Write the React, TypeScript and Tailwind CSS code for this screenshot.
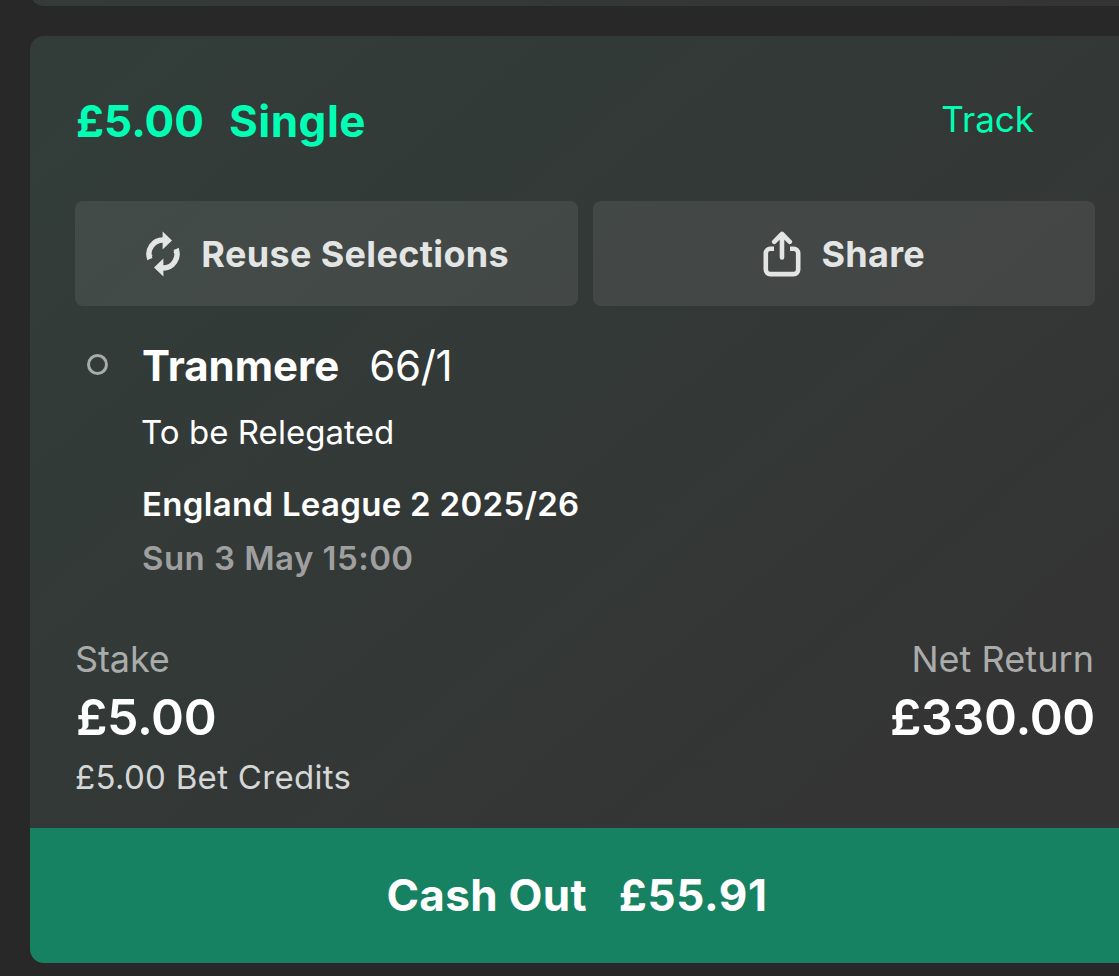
function ReuseIcon() {
  return (
    <svg width="34" height="46" viewBox="0 0 34 46" fill="none" className="shrink-0">
      <path d="M3.9 28A14 14 0 0 1 17 9" stroke="#e3e5e4" strokeWidth="5.4" />
      <path d="M1.1 29.4 6.6 24.8 4 22Z" fill="#e3e5e4" />
      <path d="M16.6 0.5 26 9.6 16.6 18.6Z" fill="#e3e5e4" />
      <path d="M30.1 18A14 14 0 0 1 17 37" stroke="#e3e5e4" strokeWidth="5.4" />
      <path d="M32.9 16.6 27.4 21.2 30 24Z" fill="#e3e5e4" />
      <path d="M17.4 27.4 8 36.4 17.4 45.5Z" fill="#e3e5e4" />
    </svg>
  );
}

function ShareIcon() {
  return (
    <svg
      width="38"
      height="46"
      viewBox="0 0 38 46"
      fill="none"
      stroke="#e3e5e4"
      strokeWidth="4.6"
      strokeLinecap="round"
      strokeLinejoin="round"
      className="shrink-0"
    >
      <path d="M19 3V26.5M11.2 10.8 19 3 26.8 10.8" />
      <path d="M11 17.7H7.3A4.5 4.5 0 0 0 2.8 22.2V38.6A4.5 4.5 0 0 0 7.3 43.1H30.7A4.5 4.5 0 0 0 35.2 38.6V22.2A4.5 4.5 0 0 0 30.7 17.7H27" strokeLinecap="butt" />
    </svg>
  );
}

export default function App() {
  return (
    <div className="h-[976px] w-[1119px] overflow-hidden bg-[#282828] pl-[30px] font-['Inter',sans-serif] text-white">
      {/* Bottom edge of the previous bet */}
      <div className="h-[6px] w-[1110px] overflow-hidden">
        <div className="-mt-[30px] h-[36px] rounded-[14px] bg-linear-to-r from-[#343b38] to-[#343434]" />
      </div>

      <div className="mt-[30px] h-[927px] w-[1110px] overflow-hidden rounded-[14px] bg-linear-to-br from-[#323d3a] via-[#333836] via-50% to-[#343434] to-80%">
        <div className="px-[45px] pt-[58px]">
          <div className="flex h-[55px] items-center justify-between pr-[61px] text-[#00ffb4]">
            <h2 className="flex gap-[25px] pl-px text-[44px] font-bold leading-[55px]">
              <span>£5.00</span>
              <span className="tracking-[0.5px]">Single</span>
            </h2>
            <button className="-mt-1 text-[35px] leading-[55px]">Track</button>
          </div>

          <div className="mt-[52px] grid grid-cols-2 gap-[15px]">
            <button className="flex h-[105px] items-center justify-center gap-[21px] rounded-[8px] bg-white/8 pl-[3px] text-[36px] font-bold text-[#e3e5e4]">
              <ReuseIcon />
              <span className="tracking-[0.35px]">Reuse Selections</span>
            </button>
            <button className="flex h-[105px] items-center justify-center gap-[20px] rounded-[8px] bg-white/8 pl-px text-[36px] font-bold text-[#e3e5e4]">
              <ShareIcon />
              <span className="tracking-[0.3px]">Share</span>
            </button>
          </div>

          {/* Selection */}
          <div className="mt-[35px] flex">
            <span className="ml-[12px] mt-[13px] h-[21px] w-[21px] shrink-0 rounded-full border-3 border-[#a9abaa]" />
            <div className="ml-[34px]">
              <div className="flex gap-[30px] text-[42px] leading-[50px]">
                <span className="font-bold">Tranmere</span>
                <span className="tracking-[-0.3px]">66/1</span>
              </div>
              <div className="-ml-px mt-[21px] text-[33px] leading-[40px] tracking-[0.05px]">To be Relegated</div>
              <div className="mt-[32px] text-[33px] font-semibold leading-[40px] tracking-[0.3px]">England League 2 2025/26</div>
              <div className="mt-[14px] text-[33px] font-semibold leading-[40px] tracking-[0.45px] text-[#9f9f9f]">Sun 3 May 15:00</div>
            </div>
          </div>

          {/* Stake and return */}
          <div className="mt-[61px] flex justify-between">
            <div>
              <div className="text-[36px] leading-[40px] tracking-[-0.1px] text-[#aaacab]">Stake</div>
              <div className="mt-[8px] pl-px text-[50px] font-semibold leading-[60px] tracking-[-0.4px]">£5.00</div>
              <div className="mt-[10px] text-[33px] leading-[40px] tracking-[0.3px] text-[#d5d6d6]">£5.00 Bet Credits</div>
            </div>
            <div className="text-right">
              <div className="pr-px text-[36px] leading-[40px] tracking-[0.05px] text-[#aaacab]">Net Return</div>
              <div className="mt-[8px] text-[50px] font-semibold leading-[60px] tracking-[-0.3px]">£330.00</div>
            </div>
          </div>
        </div>

        <button className="mt-[31px] flex h-[135px] w-full items-center justify-center gap-[32px] bg-[#168262] pb-[2px] pr-[16px] text-[44px] font-bold">
          <span className="tracking-[0.3px]">Cash Out</span>
          <span className="tracking-[0.6px]">£55.91</span>
        </button>
      </div>
    </div>
  );
}
